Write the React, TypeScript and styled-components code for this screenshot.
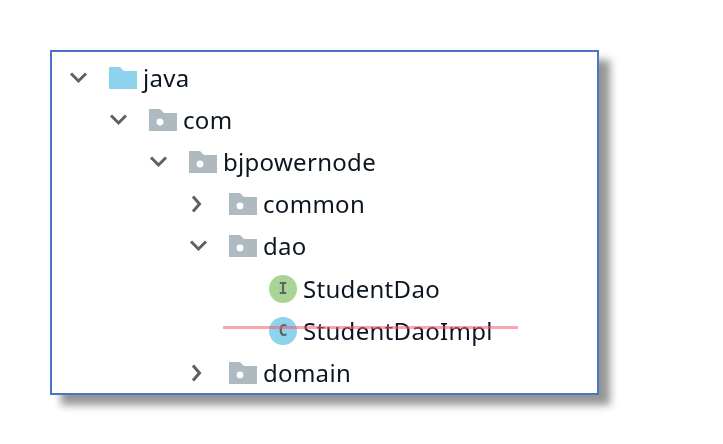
import React from "react";
import styled, { createGlobalStyle } from "styled-components";

const Global = createGlobalStyle`
  html, body { margin: 0; padding: 0; background: #fff; }
  body { width: 723px; height: 444px; overflow: hidden; }
`;

const Page = styled.div`
  width: 723px;
  height: 444px;
  padding: 50px 0 0 50px;
  box-sizing: border-box;
  background: #fff;
`;

const Panel = styled.div`
  position: relative;
  width: 549px;
  height: 345px;
  box-sizing: border-box;
  border: 2px solid #4a74c9;
  background: #fff;
  padding-top: 5px;
  box-shadow: 11px 10px 8px rgba(60, 60, 60, 0.55);
`;

const Tree = styled.ul`
  list-style: none;
  margin: 0;
  padding: 0;
  display: flex;
  flex-direction: column;
  filter: blur(0.5px);
`;

const Row = styled.li<{ $depth: number }>`
  height: 42.1px;
  display: flex;
  align-items: center;
  padding-left: ${(p) => 17 + p.$depth * 40}px;
`;

const Toggle = styled.span`
  width: 22px;
  height: 22px;
  margin-right: 18px;
  flex: none;
  display: flex;
  align-items: center;
  justify-content: center;
`;

const IconSlot = styled.span`
  width: 28px;
  height: 22px;
  flex: none;
  display: flex;
  align-items: center;
`;

const Label = styled.span`
  font-family: "Noto Sans", "Open Sans", sans-serif;
  font-size: 24px;
  letter-spacing: 0.3px;
  line-height: 28px;
  color: #0c1622;
  margin-left: 6px;
  white-space: nowrap;
`;

const Badge = styled.span<{ $bg: string }>`
  width: 28px;
  height: 28px;
  flex: none;
  border-radius: 50%;
  background: ${(p) => p.$bg};
  display: flex;
  align-items: center;
  justify-content: center;
  font-family: "DejaVu Sans Mono", "Liberation Mono", monospace;
  font-weight: 700;
  font-size: 15px;
  color: #566660;
`;

const LeafSpacer = styled.span`
  width: 80px;
  flex: none;
`;

const Strike = styled.div`
  position: absolute;
  left: 171px;
  top: 274px;
  width: 295px;
  height: 3px;
  background: rgba(248, 90, 105, 0.55);
  filter: blur(0.5px);
`;

const Chevron = ({ open }: { open: boolean }) => (
  <svg width="22" height="22" viewBox="0 0 22 22" fill="none" stroke="#5d6164" strokeWidth="3">
    {open ? <path d="M2 6.5 L9.5 14 L17 6.5" /> : <path d="M4 3.5 L10.5 11 L4 18.5" />}
  </svg>
);

const Folder = ({ source }: { source?: boolean }) => (
  <svg width="28" height="22" viewBox="0 0 28 22">
    <path d="M0 0 H11 L15 4 H28 V22 H0 Z" fill={source ? "#8dd3ed" : "#aeb9c0"} />
    {!source && <circle cx="11" cy="13" r="3.4" fill="#fff" />}
  </svg>
);

type Node = {
  name: string;
  depth: number;
  kind: "source" | "package" | "interface" | "class";
  open?: boolean;
};

const nodes: Node[] = [
  { name: "java", depth: 0, kind: "source", open: true },
  { name: "com", depth: 1, kind: "package", open: true },
  { name: "bjpowernode", depth: 2, kind: "package", open: true },
  { name: "common", depth: 3, kind: "package", open: false },
  { name: "dao", depth: 3, kind: "package", open: true },
  { name: "StudentDao", depth: 3, kind: "interface" },
  { name: "StudentDaoImpl", depth: 3, kind: "class" },
  { name: "domain", depth: 3, kind: "package", open: false },
];

export default function App() {
  return (
    <Page>
      <Global />
      <Panel>
        <Tree>
          {nodes.map((n) => (
            <Row key={n.name} $depth={n.depth}>
              {n.open === undefined ? (
                <LeafSpacer />
              ) : (
                <Toggle>
                  <Chevron open={n.open} />
                </Toggle>
              )}
              {n.kind === "interface" && <Badge $bg="#a8d496">I</Badge>}
              {n.kind === "class" && <Badge $bg="#8dd3ed">C</Badge>}
              {(n.kind === "source" || n.kind === "package") && (
                <IconSlot>
                  <Folder source={n.kind === "source"} />
                </IconSlot>
              )}
              <Label>{n.name}</Label>
            </Row>
          ))}
        </Tree>
        <Strike />
      </Panel>
    </Page>
  );
}
